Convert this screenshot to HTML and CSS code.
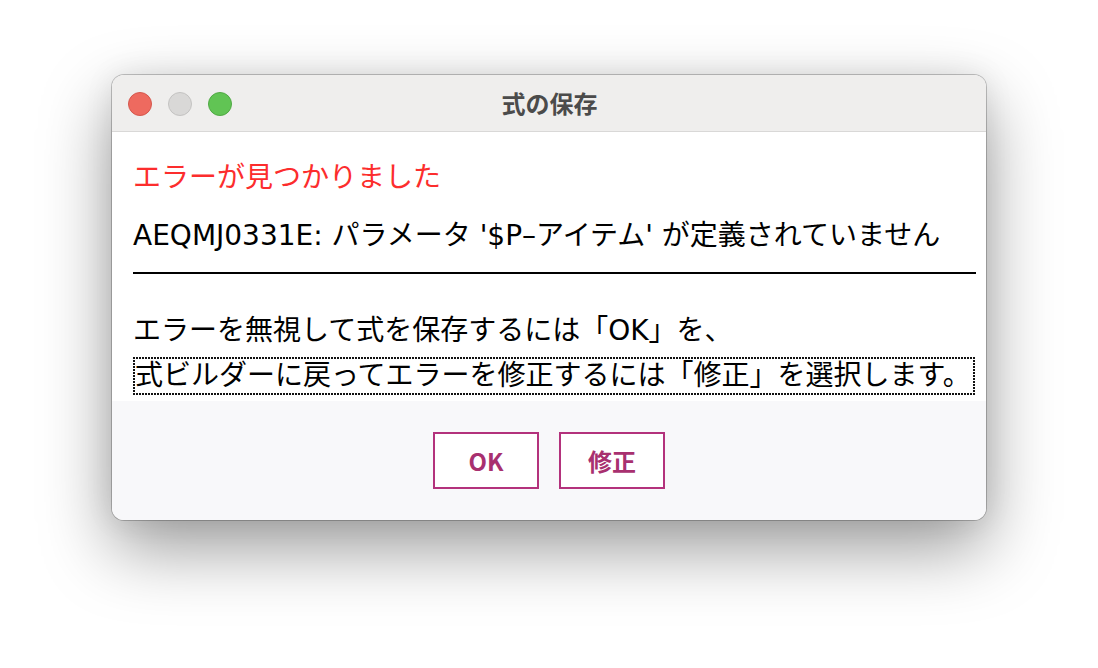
FILE: index.html
```html
<!DOCTYPE html>
<html lang="ja">
<head>
<meta charset="utf-8">
<title>式の保存</title>
<link rel="stylesheet" href="styles.css">
</head>
<body>
<div class="window">
  <div class="titlebar">
    <div class="lights">
      <span class="light red"></span>
      <span class="light gray"></span>
      <span class="light green"></span>
    </div>
    <div class="title">式の保存</div>
  </div>
  <div class="content">
    <div class="error-title">エラーが見つかりました</div>
    <div class="message">AEQMJ0331E: パラメータ '$P–アイテム' が定義されていません</div>
    <div class="rule"></div>
    <div class="para">エラーを無視して式を保存するには「OK」を、</div>
    <div class="para focus">式ビルダーに戻ってエラーを修正するには「修正」を選択します。</div>
  </div>
  <div class="footer">
    <button class="btn">OK</button>
    <button class="btn">修正</button>
  </div>
</div>
</body>
</html>
```
FILE: styles.css
```css
html, body {
  margin: 0;
  padding: 0;
  background: #ffffff;
}
html {
  height: 668px;
  overflow: hidden;
}
body {
  height: 668px;
  box-sizing: border-box;
  padding: 75px 0 0 112px;
  font-family: "DejaVu Sans", "Noto Sans CJK JP", sans-serif;
  text-spacing-trim: space-all;
}
.window {
  width: 874px;
  height: 445px;
  box-sizing: border-box;
  border-radius: 12px;
  overflow: hidden;
  display: flex;
  flex-direction: column;
  background: #ffffff;
  box-shadow: 0 0 0 1px rgba(0,0,0,0.22), 0 28px 70px rgba(0,0,0,0.40), 0 0 30px rgba(0,0,0,0.08);
}
.titlebar {
  height: 57px;
  flex: none;
  box-sizing: border-box;
  background: #efeeed;
  border-bottom: 1px solid #d9d8d7;
  display: flex;
  align-items: center;
  position: relative;
}
.lights {
  display: flex;
  gap: 16px;
  padding-left: 16px;
  padding-top: 1px;
}
.light {
  width: 24px;
  height: 24px;
  border-radius: 50%;
  box-sizing: border-box;
}
.red { background: #ee6a5f; border: 1px solid #d5574d; }
.gray { background: #d9d8d7; border: 1px solid #c4c3c2; }
.green { background: #61c454; border: 1px solid #50a944; }
.title {
  position: absolute;
  left: 0;
  right: 0;
  top: 0;
  bottom: 0;
  display: flex;
  align-items: center;
  justify-content: center;
  font-family: "Noto Sans CJK JP", sans-serif;
  font-size: 24px;
  font-weight: bold;
  color: #4b4b4b;
  padding-left: 1px;
  padding-bottom: 2px;
}
.content {
  flex: 1;
  padding: 28px 10px 0 21px;
  font-size: 28px;
  line-height: 36px;
  color: #000;
}
.error-title {
  color: #fc2d2d;
}
.message {
  margin-top: 22px;
}
.rule {
  height: 2px;
  background: #000;
  margin-top: 18px;
}
.para {
  white-space: nowrap;
}
.rule + .para {
  margin-top: 39px;
}
.focus {
  margin-top: 8px;
  margin-right: 1px;
  padding: 2px 0 2px 2px;
  line-height: 34px;
  background-image:
    repeating-linear-gradient(90deg, #111 0 1.6px, transparent 1.6px 3px),
    repeating-linear-gradient(90deg, #111 0 1.6px, transparent 1.6px 3px),
    repeating-linear-gradient(180deg, #111 0 1.6px, transparent 1.6px 3px),
    repeating-linear-gradient(180deg, #111 0 1.6px, transparent 1.6px 3px);
  background-size: 100% 2px, 100% 2px, 2px 100%, 2px 100%;
  background-position: left top, left bottom, left top, right top;
  background-repeat: no-repeat;
}
.footer {
  height: 119px;
  flex: none;
  background: #f8f8fa;
  display: flex;
  justify-content: center;
  align-items: flex-start;
  gap: 20px;
  padding-top: 31px;
  box-sizing: border-box;
}
.btn {
  width: 106px;
  height: 57px;
  box-sizing: border-box;
  border: 2px solid #b3327c;
  background: #ffffff;
  color: #a8306f;
  font-family: "Noto Sans CJK JP", "Noto Sans", sans-serif;
  font-weight: bold;
  font-size: 24px;
  padding: 0;
  margin: 0;
}
```
